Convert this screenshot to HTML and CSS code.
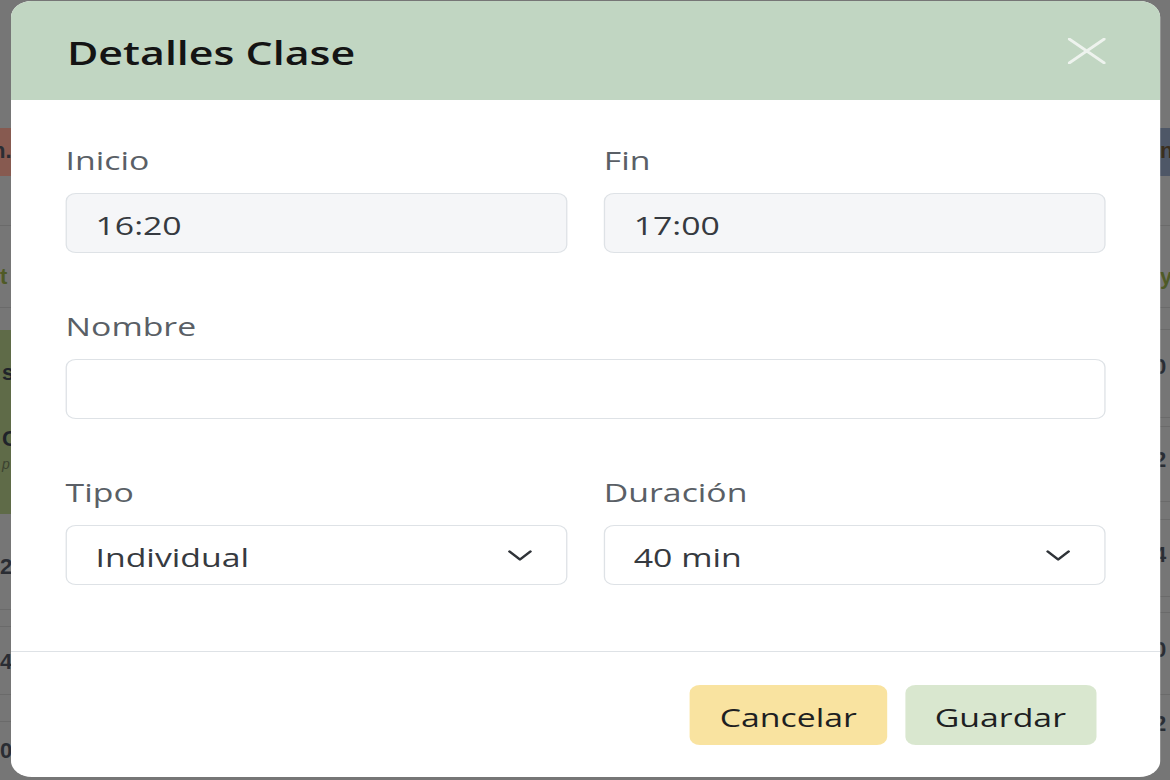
FILE: index.html
```html
<!DOCTYPE html>
<html lang="es">
<head>
<meta charset="utf-8">
<title>Detalles Clase</title>
<link rel="stylesheet" href="styles.css">
</head>
<body>
<div class="page">
  <aside class="strip strip-left">
    <div class="blk b-top"></div>
    <div class="blk b-red"><span class="frag">n.</span></div>
    <div class="blk b-r2 line"></div>
    <div class="blk b-r3 line"><span class="frag olive">t</span></div>
    <div class="blk b-r4"></div>
    <div class="blk b-green"><span class="frag f-s">s</span><span class="frag f-c">C</span><span class="frag f-p">p</span></div>
    <div class="blk b-r6 line"><span class="frag f-2">2</span></div>
    <div class="blk b-r7 line"></div>
    <div class="blk b-r8 line"><span class="frag f-4">4</span></div>
    <div class="blk b-r9 line"></div>
    <div class="blk b-r10"><span class="frag f-0">0</span></div>
  </aside>
  <main class="middle"></main>
  <aside class="strip strip-right">
    <div class="blk b-top"></div>
    <div class="blk b-slate"><span class="frag">n</span></div>
    <div class="blk b-r2 line"></div>
    <div class="blk b-r3 line"><span class="frag olive">y</span></div>
    <div class="blk b-rr4 line"></div>
    <div class="blk b-rr5 line"><span class="frag f-0r">0</span></div>
    <div class="blk b-rr6 line"></div>
    <div class="blk b-rr7 line"><span class="frag f-2r">2</span></div>
    <div class="blk b-rr8 line"></div>
    <div class="blk b-rr9 line"><span class="frag f-4r">4</span></div>
    <div class="blk b-rr10 line"></div>
    <div class="blk b-rr11 line"><span class="frag f-0r">0</span></div>
    <div class="blk b-rr12"><span class="frag f-2r">2</span></div>
  </aside>
</div>

<div class="dialog" role="dialog" aria-labelledby="dlg-title">
  <header class="m-header">
    <h5 class="m-title" id="dlg-title">Detalles Clase</h5>
    <button class="btn-close" type="button" aria-label="Cerrar">
      <svg class="x-icon" viewBox="0 0 29 26" preserveAspectRatio="none" aria-hidden="true">
        <path d="M1 1 L28 25 M28 1 L1 25" />
      </svg>
    </button>
  </header>
  <div class="m-body">
    <div class="row two">
      <div class="field">
        <label class="lbl">Inicio</label>
        <input class="input readonly" type="text" value="16:20" readonly>
      </div>
      <div class="field">
        <label class="lbl">Fin</label>
        <input class="input readonly" type="text" value="17:00" readonly>
      </div>
    </div>
    <div class="row">
      <div class="field">
        <label class="lbl">Nombre</label>
        <input class="input" type="text" value="">
      </div>
    </div>
    <div class="row two">
      <div class="field">
        <label class="lbl">Tipo</label>
        <div class="input select">
          <span>Individual</span>
          <svg class="chev" viewBox="0 0 19 11" aria-hidden="true"><path d="M1.5 1.5 L9.5 9.5 L17.5 1.5" /></svg>
        </div>
      </div>
      <div class="field">
        <label class="lbl">Duración</label>
        <div class="input select">
          <span>40 min</span>
          <svg class="chev" viewBox="0 0 19 11" aria-hidden="true"><path d="M1.5 1.5 L9.5 9.5 L17.5 1.5" /></svg>
        </div>
      </div>
    </div>
  </div>
  <footer class="m-footer">
    <button class="btn btn-cancel" type="button">Cancelar</button>
    <button class="btn btn-save" type="button">Guardar</button>
  </footer>
</div>
</body>
</html>
```

FILE: styles.css
```css
* { box-sizing: border-box; }

html, body {
  margin: 0;
  padding: 0;
  height: 100%;
}

body {
  background: #767676;
  font-family: "Open Sans", "Noto Sans", "Liberation Sans", sans-serif;
  overflow: hidden;
}

/* dimmed page behind the modal */
.page {
  display: grid;
  grid-template-columns: 11px 1fr 10px;
  height: 780px;
}

.strip {
  display: flex;
  flex-direction: column;
  overflow: hidden;
}

.blk {
  position: relative;
  flex: none;
  overflow: hidden;
  font-family: "Liberation Sans", sans-serif;
  font-size: 22px;
  font-weight: 700;
  color: #2a2d33;
  white-space: nowrap;
}

.line { border-bottom: 1px solid #6a6a6a; }

.frag { display: block; }

.b-top { height: 128px; }
.b-red { height: 48px; background: #875a50; padding-top: 10px; }
.strip-left .b-red .frag { margin-left: -8px; }
.b-slate { height: 48px; background: #4e5767; padding-top: 10px; color: #3b2f1e; }
.b-r2 { height: 50px; }
.b-r3 { height: 82px; padding-top: 38px; }
.olive { color: #4f5a26; }
.b-r4 { height: 22px; }
.b-green { height: 184px; background: #5f6b48; padding-top: 30px; color: #20232a; }
.strip-left .b-green .frag { margin-left: 2px; }
.f-c { margin-top: 40px; }
.f-p { margin-top: 4px; font-size: 14px; font-weight: 400; font-style: italic; color: #3b4230; }
.b-r6 { height: 96px; padding-top: 40px; }
.b-r7 { height: 17px; }
.b-r8 { height: 68px; padding-top: 22px; }
.b-r9 { height: 27px; }
.b-r10 { height: 60px; padding-top: 16px; }

.b-rr4 { height: 22px; }
.b-rr5 { height: 88px; padding-top: 24px; margin-left: -6px; }
.b-rr6 { height: 9px; }
.b-rr7 { height: 75px; padding-top: 20px; margin-left: -6px; }
.b-rr8 { height: 18px; }
.b-rr9 { height: 77px; padding-top: 22px; margin-left: -6px; }
.b-rr10 { height: 16px; }
.b-rr11 { height: 82px; padding-top: 24px; margin-left: -6px; }
.b-rr12 { height: 60px; padding-top: 16px; margin-left: -6px; }

/* modal dialog (overlay) */
.dialog {
  position: fixed;
  top: 1px;
  left: 11px;
  width: 884px;
  background: #ffffff;
  border-radius: 16px;
  overflow: hidden;
  transform: scaleX(1.3);
  transform-origin: 0 0;
}

.m-header {
  height: 99px;
  background: #c1d6c2;
  display: flex;
  align-items: center;
  justify-content: space-between;
  padding: 0 42px 0 43px;
}

.m-title {
  margin: 0;
  padding-top: 4px;
  font-size: 33px;
  line-height: 1.2;
  font-weight: 600;
  color: #141414;
}

.btn-close {
  border: 0;
  background: none;
  padding: 0;
  width: 29px;
  height: 26px;
  display: flex;
}

.x-icon {
  width: 29px;
  height: 26px;
  fill: none;
  stroke: #eef3ee;
  stroke-width: 2.6;
  stroke-linecap: round;
}

.m-body {
  padding: 41px 42px 66px 42px;
  display: flex;
  flex-direction: column;
  gap: 54px;
}

.row {
  display: grid;
  grid-template-columns: 1fr;
}

.row.two {
  grid-template-columns: 1fr 1fr;
  column-gap: 28px;
}

.field {
  display: flex;
  flex-direction: column;
}

.lbl {
  font-size: 26px;
  line-height: 39px;
  color: #5a5f66;
  margin-bottom: 13px;
}

.input {
  height: 60px;
  width: 100%;
  border: 1px solid #dee2e6;
  border-radius: 8px;
  background: #ffffff;
  padding: 4px 22px 0 22px;
  font-family: "Open Sans", "Noto Sans", "Liberation Sans", sans-serif;
  font-size: 26px;
  color: #363a40;
  outline: none;
}

.input.readonly {
  background: #f5f6f8;
}

.select {
  display: flex;
  align-items: center;
  justify-content: space-between;
  padding-right: 26px;
}

.chev {
  width: 19px;
  height: 11px;
  margin-top: -4px;
  fill: none;
  stroke: #2f3338;
  stroke-width: 2.2;
  stroke-linecap: round;
  stroke-linejoin: round;
}

.m-footer {
  border-top: 1px solid #dee2e6;
  padding: 33px 49.5px 32px 0;
  display: flex;
  justify-content: flex-end;
  gap: 14px;
}

.btn {
  height: 60px;
  border: 0;
  border-radius: 8px;
  padding: 4px 23px 0;
  font-family: "Open Sans", "Noto Sans", "Liberation Sans", sans-serif;
  font-size: 26px;
  color: #1e1f22;
}

.btn-cancel { background: #f9e3a0; }
.btn-save { background: #d9e7cf; }
```
